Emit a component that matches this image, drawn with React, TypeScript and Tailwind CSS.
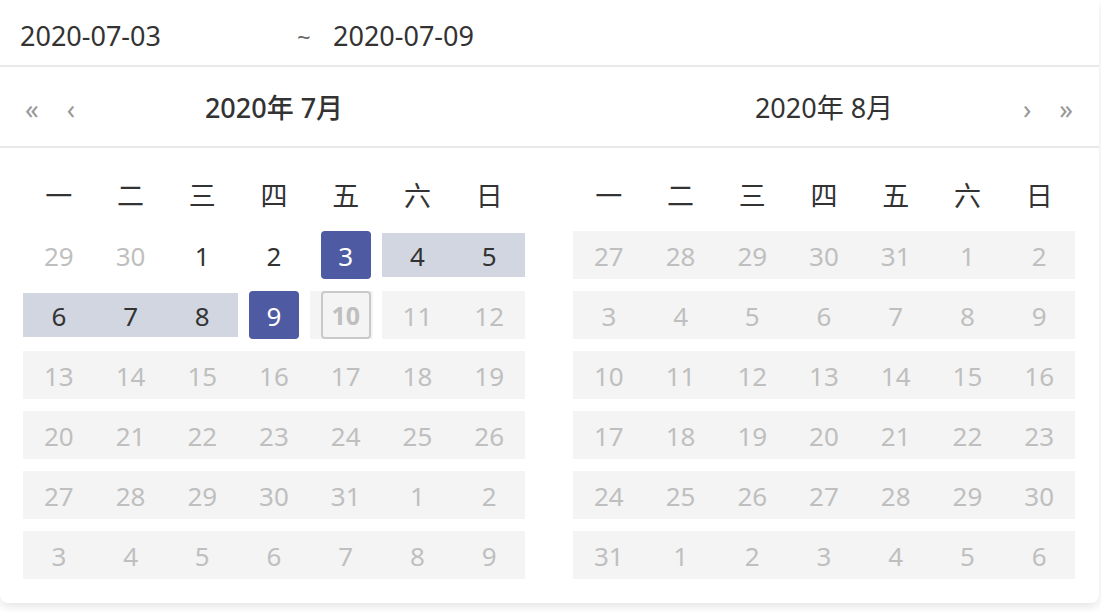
import React from "react";

type Kind = "other" | "plain" | "sel" | "range" | "dis" | "today";
type Cell = { d: number; k: Kind };

const FONT = { fontFamily: '"Noto Sans", "Noto Sans CJK SC", sans-serif' };

const weekdays = ["一", "二", "三", "四", "五", "六", "日"];

function mk(nums: number[], kinds: Kind[]): Cell[] {
  return nums.map((d, i) => ({ d, k: kinds[i] }));
}

const D7: Kind[] = ["dis", "dis", "dis", "dis", "dis", "dis", "dis"];

const july: Cell[][] = [
  mk([29, 30, 1, 2, 3, 4, 5], ["other", "other", "plain", "plain", "sel", "range", "range"]),
  mk([6, 7, 8, 9, 10, 11, 12], ["range", "range", "range", "sel", "today", "dis", "dis"]),
  mk([13, 14, 15, 16, 17, 18, 19], D7),
  mk([20, 21, 22, 23, 24, 25, 26], D7),
  mk([27, 28, 29, 30, 31, 1, 2], D7),
  mk([3, 4, 5, 6, 7, 8, 9], D7),
];

const august: Cell[][] = [
  mk([27, 28, 29, 30, 31, 1, 2], D7),
  mk([3, 4, 5, 6, 7, 8, 9], D7),
  mk([10, 11, 12, 13, 14, 15, 16], D7),
  mk([17, 18, 19, 20, 21, 22, 23], D7),
  mk([24, 25, 26, 27, 28, 29, 30], D7),
  mk([31, 1, 2, 3, 4, 5, 6], D7),
];

function DayCell({ c }: { c: Cell }) {
  const base = "h-[48px] flex items-center justify-center text-[26px] pt-[2px]";
  switch (c.k) {
    case "other":
      return <div className={`${base} text-[#bfbfbf]`}>{c.d}</div>;
    case "plain":
      return <div className={`${base} text-[#333333]`}>{c.d}</div>;
    case "sel":
      return (
        <div className="h-[48px] flex">
          <div className="flex-1 mx-[11px] rounded-[4px] bg-[#4e5aa1] text-white text-[26px] pt-[2px] flex items-center justify-center">
            {c.d}
          </div>
        </div>
      );
    case "range":
      return (
        <div className="h-[48px] flex items-center">
          <div className="w-full h-[44px] bg-[#d2d6e0] text-[#333333] text-[26px] pt-[2px] flex items-center justify-center">
            {c.d}
          </div>
        </div>
      );
    case "dis":
      return <div className={`${base} bg-[#f4f4f4] text-[#bfbfbf]`}>{c.d}</div>;
    case "today":
      return (
        <div className="h-[48px] flex">
          <div className="flex-1 mr-[9px] bg-[#f4f4f4] flex pl-[11px] pr-[2px]">
            <div className="flex-1 border-2 border-[#c9c9c9] rounded-[4px] text-[#bfbfbf] font-bold text-[25px] pt-[2px] flex items-center justify-center">
              {c.d}
            </div>
          </div>
        </div>
      );
  }
}

function Month({ rows }: { rows: Cell[][] }) {
  return (
    <div className="w-[502px] flex flex-col gap-[12px]">
      <div className="grid grid-cols-7 h-[48px]">
        {weekdays.map((w) => (
          <div key={w} className="flex items-center justify-center text-[27px] pt-[3px] text-[#333333]">
            {w}
          </div>
        ))}
      </div>
      {rows.map((r, i) => (
        <div key={i} className="grid grid-cols-7">
          {r.map((c, j) => (
            <DayCell key={j} c={c} />
          ))}
        </div>
      ))}
    </div>
  );
}

export default function App() {
  return (
    <div className="w-[1101px] h-[612px] bg-white" style={FONT}>
      <div className="w-[1099px] bg-white rounded-b-[8px] shadow-[0_4px_10px_rgba(0,0,0,0.10)]">
        <div className="h-[67px] flex items-center pl-[20px] pt-[8px] border-b-2 border-[#e9e9e9] text-[27px] text-[#333333]">
          <span className="w-[277px]">2020-07-03</span>
          <span className="w-[36px] text-[#666666] text-[24px]">~</span>
          <span>2020-07-09</span>
        </div>
        <div className="h-[81px] flex gap-[48px] px-[23px] pt-[4px] border-b-2 border-[#e9e9e9]">
          <div className="w-[502px] relative flex items-center justify-center">
            <div className="absolute left-[2px] top-0 bottom-0 flex items-center gap-[28px] text-[#999999] text-[27px] pt-[2px]">
              <span>«</span>
              <span>‹</span>
            </div>
            <span className="text-[27px] font-medium text-[#333333]">2020年 7月</span>
          </div>
          <div className="w-[502px] relative flex items-center justify-center">
            <span className="text-[27px] text-[#333333]">2020年 8月</span>
            <div className="absolute right-[2px] top-0 bottom-0 flex items-center gap-[28px] text-[#999999] text-[27px] pt-[2px]">
              <span>›</span>
              <span>»</span>
            </div>
          </div>
        </div>
        <div className="flex gap-[48px] px-[23px] pt-[23px] pb-[24px]">
          <Month rows={july} />
          <Month rows={august} />
        </div>
      </div>
    </div>
  );
}
